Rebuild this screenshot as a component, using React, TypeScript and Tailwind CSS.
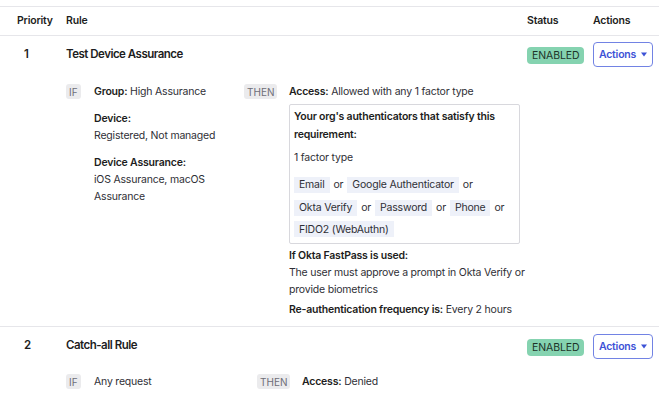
import React from "react";

const Tag = ({ children }: { children: React.ReactNode }) => (
  <span className="inline-flex h-[15px] items-center rounded-[3px] bg-[#ebebed] px-[3px] text-[10px] leading-none tracking-normal text-[#6e6e78]">
    {children}
  </span>
);

const Chip = ({ children }: { children: React.ReactNode }) => (
  <span className="inline-flex h-[16px] shrink-0 items-center whitespace-nowrap bg-[#eef1f9] px-[5px] text-[#2f2f36]">
    {children}
  </span>
);

const Or = () => <span className="shrink-0 text-[#2f2f36]">or</span>;

const Status = () => (
  <span className="inline-flex h-[17px] items-center rounded-[4px] bg-[#85d3b0] px-[5px] text-[10.5px] tracking-[-0.1px] text-[#1d3328]">
    ENABLED
  </span>
);

const ActionsBtn = () => (
  <button className="flex h-[25px] w-[60px] items-center justify-center gap-[5px] rounded-[4px] border border-[#7283e4] bg-white text-[10.5px] font-semibold text-[#3d52d6]">
    Actions
    <svg width="6" height="5" viewBox="0 0 6 5">
      <path d="M0 0.5h6L3 4.5z" fill="#3d52d6" />
    </svg>
  </button>
);

export default function App() {
  return (
    <div
      className="h-[403px] w-[668px] overflow-hidden bg-white text-[10.5px] tracking-[-0.2px] text-[#1d1d21]"
      style={{ fontFamily: "Inter, 'Noto Sans', sans-serif" }}
    >
      <div className="mt-[6px] w-[659px] border-t border-[#e6e6ea]">
        {/* header */}
        <div className="flex h-[29px] items-center border-b border-[#e6e6ea] font-semibold">
          <div className="w-[66px] pl-[17px]">Priority</div>
          <div className="w-[461px]">Rule</div>
          <div className="w-[66px]">Status</div>
          <div>Actions</div>
        </div>

        {/* row 1 */}
        <div className="flex border-b border-[#e6e6ea] pb-[8px]">
          <div className="w-[66px] pl-[24px] pt-[10px] text-[11.5px] font-semibold leading-[17px]">1</div>
          <div className="w-[461px] pt-[10px]">
            <div className="text-[11.5px] font-semibold leading-[17px] tracking-[-0.5px]">Test Device Assurance</div>
            <div className="mt-[20px] flex leading-[17px]">
              <div className="flex w-[28px] items-start pt-[1px]">
                <Tag>IF</Tag>
              </div>
              <div className="w-[150px] text-[#2f2f36]">
                <div>
                  <span className="font-semibold text-[#1d1d21]">Group:</span> High Assurance
                </div>
                <div className="mt-[10px] font-semibold text-[#1d1d21]">Device:</div>
                <div>Registered, Not managed</div>
                <div className="mt-[10px] font-semibold text-[#1d1d21]">Device Assurance:</div>
                <div>iOS Assurance, macOS</div>
                <div>Assurance</div>
              </div>
              <div className="flex w-[45px] items-start pt-[1px]">
                <Tag>THEN</Tag>
              </div>
              <div className="w-[231px] text-[#2f2f36]">
                <div>
                  <span className="font-semibold text-[#1d1d21]">Access:</span> Allowed with any 1 factor type
                </div>
                <div className="mt-[4px] rounded-[2px] border border-[#d8d8dd] px-[4px] pb-[6px] pt-[3px]">
                  <div className="font-semibold leading-[18px] text-[#1d1d21]">
                    Your org's authenticators that satisfy this requirement:
                  </div>
                  <div className="mt-[5px]">1 factor type</div>
                  <div className="mt-[10px] flex items-center gap-[4px]">
                    <Chip>Email</Chip>
                    <Or />
                    <Chip>Google Authenticator</Chip>
                    <Or />
                  </div>
                  <div className="mt-[6px] flex items-center gap-[4px]">
                    <Chip>Okta Verify</Chip>
                    <Or />
                    <Chip>Password</Chip>
                    <Or />
                    <Chip>Phone</Chip>
                    <Or />
                  </div>
                  <div className="mt-[5px] flex items-center gap-[4px]">
                    <Chip>FIDO2 (WebAuthn)</Chip>
                  </div>
                </div>
                <div className="mt-[3px] font-semibold text-[#1d1d21]">If Okta FastPass is used:</div>
                <div className="w-[240px]">The user must approve a prompt in Okta Verify or provide biometrics</div>
                <div className="mt-[3px]">
                  <span className="font-semibold text-[#1d1d21]">Re-authentication frequency is:</span> Every 2 hours
                </div>
              </div>
            </div>
          </div>
          <div className="flex w-[66px] items-start pt-[11px]">
            <Status />
          </div>
          <div className="pt-[6px]">
            <ActionsBtn />
          </div>
        </div>

        {/* row 2 */}
        <div className="flex pb-[8px]">
          <div className="w-[66px] pl-[24px] pt-[10px] text-[11.5px] font-semibold leading-[17px]">2</div>
          <div className="w-[461px] pt-[10px]">
            <div className="text-[11.5px] font-semibold leading-[17px] tracking-[-0.5px]">Catch-all Rule</div>
            <div className="mt-[19px] flex leading-[17px]">
              <div className="flex w-[28px] items-start pt-[1px]">
                <Tag>IF</Tag>
              </div>
              <div className="w-[163px] text-[#2f2f36]">Any request</div>
              <div className="flex w-[45px] items-start pt-[1px]">
                <Tag>THEN</Tag>
              </div>
              <div className="text-[#2f2f36]">
                <span className="font-semibold text-[#1d1d21]">Access:</span> Denied
              </div>
            </div>
          </div>
          <div className="flex w-[66px] items-start pt-[12px]">
            <Status />
          </div>
          <div className="pt-[7px]">
            <ActionsBtn />
          </div>
        </div>
      </div>
    </div>
  );
}
